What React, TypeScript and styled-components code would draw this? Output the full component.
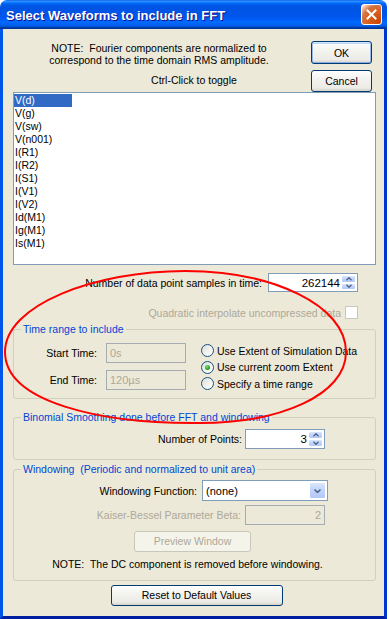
import React, { useState } from 'react';
import styled, { createGlobalStyle } from 'styled-components';

const GlobalStyle = createGlobalStyle`
  html, body { margin: 0; padding: 0; background: #ffffff; }
  body {
    font-family: "Liberation Sans", Arial, sans-serif;
    font-size: 10.5px;
    color: #000;
  }
  * { box-sizing: border-box; }
`;

const Screen = styled.div`
  position: relative;
  width: 389px;
  height: 619px;
  overflow: hidden;
`;

const Window = styled.div`
  width: 387px;
  height: 619px;
  display: flex;
  flex-direction: column;
`;

const TitleBar = styled.div`
  flex: none;
  height: 29px;
  display: flex;
  align-items: center;
  justify-content: space-between;
  padding: 0 5px 0 6px;
  border-radius: 7px 7px 0 0;
  background: linear-gradient(180deg, #0058ee 0%, #3593ff 4%, #288eff 6%, #127dff 8%, #036ffc 10%,
    #0262ee 14%, #0057e5 20%, #0054e3 24%, #0055eb 56%, #005bf5 66%, #026afe 76%, #0062ef 86%,
    #0052d6 92%, #0040ab 94%, #003092 100%);
`;

const TitleText = styled.span`
  color: #fff;
  font-family: "Liberation Sans", Arial, sans-serif;
  font-weight: bold;
  font-size: 13px;
  text-shadow: 1px 1px #0f1089;
  padding-top: 1px;
`;

const CloseButton = styled.div`
  width: 21px;
  height: 21px;
  border: 1px solid #fff;
  border-radius: 3px;
  display: flex;
  align-items: center;
  justify-content: center;
  background: radial-gradient(circle at 90% 90%, #cc4600 0%, #dc6527 55%, #cd7546 70%, #ffccb2 90%, #fff 100%);
`;

const Body = styled.div`
  flex: 1;
  display: flex;
  flex-direction: column;
  background: #ece9d8;
  border-left: 3px solid #0055ea;
  border-right: 3px solid #0036d0;
  border-bottom: 3px solid #001ea0;
  padding: 0 8px 0 10px;
`;

const TopArea = styled.div`
  display: flex;
  height: 63px;
`;

const NoteColumn = styled.div`
  width: 292px;
  padding-top: 13px;
  text-align: center;
  line-height: 12px;
  white-space: pre;
`;

const CtrlHint = styled.div`
  margin-top: 8px;
  padding-left: 70px;
`;

const ButtonColumn = styled.div`
  margin-left: 6px;
  padding-top: 12px;
  display: flex;
  flex-direction: column;
  gap: 6px;
`;

const PushButton = styled.div<{ $w: number; $h: number; $default?: boolean; $disabled?: boolean }>`
  width: ${p => p.$w}px;
  height: ${p => p.$h}px;
  flex: none;
  display: flex;
  align-items: center;
  justify-content: center;
  border-radius: 3px;
  border: 1px solid ${p => (p.$disabled ? '#c9c7ba' : '#003c74')};
  color: ${p => (p.$disabled ? '#aca899' : '#000')};
  background: ${p => (p.$disabled ? '#f5f4ea' : 'linear-gradient(180deg, #ffffff 0%, #f3f3ef 40%, #ecebe6 85%, #d6d0c5 100%)')};
  box-shadow: ${p =>
    p.$default
      ? 'inset 0 1px #cee7ff, inset 1px 0 #98b8ea, inset -1px 0 #98b8ea, inset 0 -1px #89ade4, inset 0 2px #bcd4f6'
      : 'none'};
`;

const WaveList = styled.div`
  flex: none;
  height: 173px;
  border: 1px solid #7f9db9;
  background: #fff;
  padding: 1px 0;
  overflow: hidden;
`;

const WaveItem = styled.div<{ $selected: boolean }>`
  width: 58px;
  height: 13px;
  line-height: 13px;
  padding-left: 1px;
  white-space: nowrap;
  background: ${p => (p.$selected ? '#316ac5' : 'transparent')};
  color: ${p => (p.$selected ? '#fff' : '#000')};
`;

const FieldRow = styled.div<{ $gap: number; $top: number }>`
  display: flex;
  align-items: center;
  gap: ${p => p.$gap}px;
  margin-top: ${p => p.$top}px;
`;

const FieldLabel = styled.span<{ $w: number; $dim?: boolean }>`
  width: ${p => p.$w}px;
  flex: none;
  text-align: right;
  white-space: nowrap;
  color: ${p => (p.$dim ? '#aca899' : '#000')};
`;

const SpinBox = styled.div<{ $w: number; $h: number }>`
  width: ${p => p.$w}px;
  height: ${p => p.$h}px;
  flex: none;
  display: flex;
  border: 1px solid #7f9db9;
  background: #fff;
`;

const SpinValue = styled.div`
  flex: 1;
  align-self: center;
  text-align: right;
  padding-right: 1px;
  font-size: 11.5px;
`;

const SpinButtons = styled.div`
  width: 16px;
  display: flex;
  flex-direction: column;
  padding: 1px 1px 1px 0;
`;

const SpinArrow = styled.div`
  flex: 1;
  display: flex;
  align-items: center;
  justify-content: center;
  border: 1px solid #fff;
  border-radius: 2px;
  background: linear-gradient(180deg, #dbe6fd 0%, #c1d3fb 50%, #b4c8f6 100%);
`;

const DropBox = styled.div<{ $w: number; $h: number }>`
  width: ${p => p.$w}px;
  height: ${p => p.$h}px;
  flex: none;
  display: flex;
  border: 1px solid #7f9db9;
  background: #fff;
`;

const DropValue = styled.div`
  flex: 1;
  align-self: center;
  padding-left: 3px;
  font-size: 11px;
`;

const DropArrow = styled.div`
  width: 17px;
  margin: 1px;
  display: flex;
  align-items: center;
  justify-content: center;
  border: 1px solid #fff;
  border-radius: 2px;
  background: linear-gradient(180deg, #dbe6fd 0%, #c1d3fb 50%, #b4c8f6 100%);
`;

const DimInput = styled.div<{ $w: number; $h: number; $align?: string }>`
  width: ${p => p.$w}px;
  height: ${p => p.$h}px;
  flex: none;
  display: flex;
  align-items: center;
  justify-content: ${p => p.$align || 'flex-start'};
  padding: 0 3px;
  border: 1px solid #a5acb2;
  background: #ece9d8;
  color: #aca899;
  font-size: 11px;
`;

const CheckBox = styled.span`
  width: 13px;
  height: 13px;
  flex: none;
  border: 1px solid #cac8bb;
  background: #fff;
`;

const Group = styled.fieldset<{ $pad: string; $top: number }>`
  margin: ${p => p.$top}px 0 0 0;
  padding: ${p => p.$pad};
  min-width: 0;
  border: 1px solid #d0d0bf;
  border-radius: 3px;
`;

const GroupTitle = styled.legend`
  color: #0046d5;
  padding: 0 2px;
  margin-left: 7px;
  line-height: 13px;
  white-space: pre;
`;

const TimeLayout = styled.div`
  display: flex;
  align-items: flex-start;
`;

const TimeFields = styled.div`
  display: flex;
  flex-direction: column;
  gap: 7px;
`;

const RadioColumn = styled.div`
  margin-left: 15px;
  margin-top: -0.5px;
  display: flex;
  flex-direction: column;
`;

const RadioRow = styled.div`
  height: 16.5px;
  display: flex;
  align-items: center;
  gap: 3px;
  white-space: nowrap;
`;

const RadioCircle = styled.span<{ $checked: boolean }>`
  width: 13px;
  height: 13px;
  flex: none;
  border-radius: 50%;
  border: 1px solid #1c5180;
  background: linear-gradient(135deg, #dcdcd7 0%, #f4f4f0 60%, #ffffff 100%);
  display: flex;
  align-items: center;
  justify-content: center;
  &::after {
    content: '';
    display: ${p => (p.$checked ? 'block' : 'none')};
    width: 5px;
    height: 5px;
    border-radius: 50%;
    background: radial-gradient(circle at 40% 35%, #7be27a 0%, #21a121 60%, #178a17 100%);
  }
`;

const CenterRow = styled.div<{ $top: number; $shift?: number }>`
  display: flex;
  justify-content: center;
  margin-top: ${p => p.$top}px;
  padding-left: ${p => Math.max(0, p.$shift || 0)}px;
  padding-right: ${p => Math.max(0, -(p.$shift || 0))}px;
  white-space: pre;
  line-height: 13px;
`;

const Overlay = styled.svg`
  position: absolute;
  left: 0;
  top: 0;
  pointer-events: none;
`;

const waveforms = ['V(d)', 'V(g)', 'V(sw)', 'V(n001)', 'I(R1)', 'I(R2)', 'I(S1)', 'I(V1)', 'I(V2)', 'Id(M1)', 'Ig(M1)', 'Is(M1)'];

const Chevron: React.FC<{ up?: boolean; w?: number }> = ({ up, w = 7 }) => (
  <svg width={w} height={4} viewBox="0 0 7 4">
    <path d={up ? 'M0.5,3.5 L3.5,0.5 L6.5,3.5' : 'M0.5,0.5 L3.5,3.5 L6.5,0.5'} fill="none" stroke="#4d6185" strokeWidth="1.5" />
  </svg>
);

const Spinner: React.FC<{ value: string; w: number; h: number }> = ({ value, w, h }) => (
  <SpinBox $w={w} $h={h}>
    <SpinValue>{value}</SpinValue>
    <SpinButtons>
      <SpinArrow><Chevron up w={6} /></SpinArrow>
      <SpinArrow><Chevron w={6} /></SpinArrow>
    </SpinButtons>
  </SpinBox>
);

const timeModes = ['Use Extent of Simulation Data', 'Use current zoom Extent', 'Specify a time range'];

export default function App() {
  const [selected, setSelected] = useState(0);
  const [mode, setMode] = useState(1);

  return (
    <Screen>
      <GlobalStyle />
      <Window>
        <TitleBar>
          <TitleText>Select Waveforms to include in FFT</TitleText>
          <CloseButton>
            <svg width="11" height="11" viewBox="0 0 11 11">
              <path d="M1.5,1.5 L9.5,9.5 M9.5,1.5 L1.5,9.5" stroke="#fff" strokeWidth="2" strokeLinecap="square" />
            </svg>
          </CloseButton>
        </TitleBar>
        <Body>
          <TopArea>
            <NoteColumn>
              <div>{'NOTE:  Fourier components are normalized to'}</div>
              <div>correspond to the time domain RMS amplitude.</div>
              <CtrlHint>Ctrl-Click to toggle</CtrlHint>
            </NoteColumn>
            <ButtonColumn>
              <PushButton $w={61} $h={23} $default>OK</PushButton>
              <PushButton $w={61} $h={22}>Cancel</PushButton>
            </ButtonColumn>
          </TopArea>

          <WaveList>
            {waveforms.map((w, i) => (
              <WaveItem key={w} $selected={i === selected} onClick={() => setSelected(i)}>{w}</WaveItem>
            ))}
          </WaveList>

          <FieldRow $gap={6} $top={8}>
            <FieldLabel $w={249}>Number of data point samples in time:</FieldLabel>
            <Spinner value="262144" w={90} h={19} />
          </FieldRow>
          <FieldRow $gap={4} $top={14}>
            <FieldLabel $w={328} $dim>Quadratic interpolate uncompressed data</FieldLabel>
            <CheckBox />
          </FieldRow>

          <Group $top={3.5} $pad="7.5px 0 6px 0">
            <GroupTitle>Time range to include</GroupTitle>
            <TimeLayout>
              <TimeFields>
                <FieldRow $gap={9} $top={0}>
                  <FieldLabel $w={83}>Start Time:</FieldLabel>
                  <DimInput $w={80} $h={20}>0s</DimInput>
                </FieldRow>
                <FieldRow $gap={9} $top={0}>
                  <FieldLabel $w={83}>End Time:</FieldLabel>
                  <DimInput $w={80} $h={20}>120µs</DimInput>
                </FieldRow>
              </TimeFields>
              <RadioColumn>
                {timeModes.map((m, i) => (
                  <RadioRow key={m} onClick={() => setMode(i)}>
                    <RadioCircle $checked={mode === i} />
                    {m}
                  </RadioRow>
                ))}
              </RadioColumn>
            </TimeLayout>
          </Group>

          <Group $top={11.5} $pad="5.5px 0 10px 0">
            <GroupTitle>Binomial Smoothing done before FFT and windowing</GroupTitle>
            <FieldRow $gap={3} $top={0}>
              <FieldLabel $w={228}>Number of Points:</FieldLabel>
              <Spinner value="3" w={80} h={20} />
            </FieldRow>
          </Group>

          <Group $top={2.5} $pad="4.5px 0 9px 0">
            <GroupTitle>{'Windowing  (Periodic and normalized to unit area)'}</GroupTitle>
            <FieldRow $gap={5} $top={0}>
              <FieldLabel $w={183}>Windowing Function:</FieldLabel>
              <DropBox $w={126} $h={21}>
                <DropValue>(none)</DropValue>
                <DropArrow><Chevron /></DropArrow>
              </DropBox>
            </FieldRow>
            <FieldRow $gap={4} $top={4}>
              <FieldLabel $w={227} $dim>Kaiser-Bessel Parameter Beta:</FieldLabel>
              <DimInput $w={80} $h={20} $align="flex-end">2</DimInput>
            </FieldRow>
            <CenterRow $top={6} $shift={-4}>
              <PushButton $w={117} $h={21} $disabled>Preview Window</PushButton>
            </CenterRow>
            <CenterRow $top={6} $shift={-14}>{'NOTE:  The DC component is removed before windowing.'}</CenterRow>
          </Group>

          <CenterRow $top={4} $shift={4}>
            <PushButton $w={172} $h={21}>Reset to Default Values</PushButton>
          </CenterRow>
        </Body>
      </Window>
      <Overlay width="389" height="619" viewBox="0 0 389 619">
        <path
          d="M 185,271 C 272,271 346,305 346,352 C 346,395 280,423 200,423 C 100,424 5,402 5,352 C 5,305 95,271 185,271 Z"
          fill="none"
          stroke="#ff0000"
          strokeWidth="2"
        />
      </Overlay>
    </Screen>
  );
}
